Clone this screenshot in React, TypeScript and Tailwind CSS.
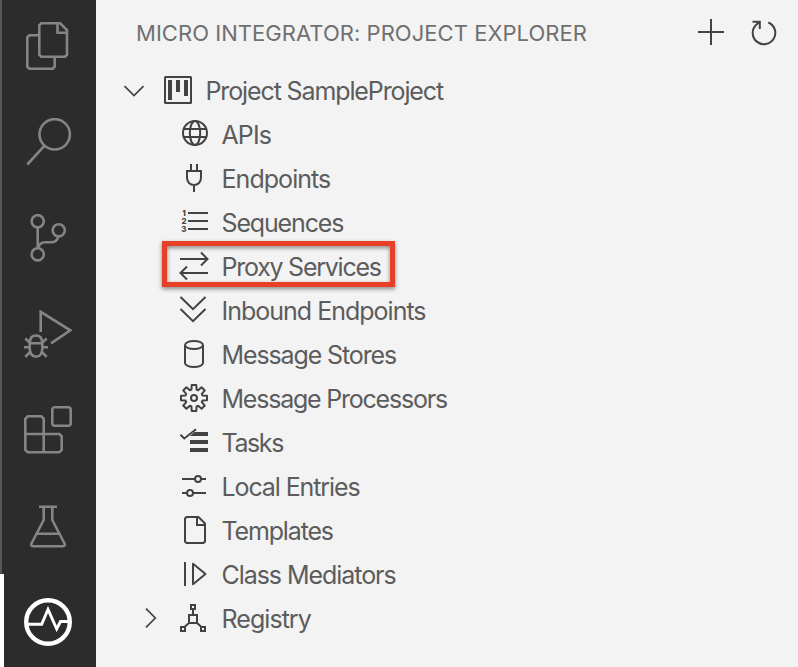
import type { ReactNode } from "react";

function ActivityIcon({ children, active = false }: { children: ReactNode; active?: boolean }) {
  return (
    <div className={`relative flex h-24 w-24 shrink-0 items-center justify-center ${active ? "text-white" : "text-[#858585]"}`}>
      <span className={`absolute left-0 top-0 h-full ${active ? "w-1 bg-white" : "w-0.5 bg-[#575757]"}`} />
      <svg viewBox="0 0 48 48" className="size-12" fill="none" stroke="currentColor" strokeWidth="2.6">
        {children}
      </svg>
    </div>
  );
}

function Glyph({ children }: { children: ReactNode }) {
  return (
    <svg viewBox="0 0 32 32" className="size-8 shrink-0" fill="none" stroke="#424242" strokeWidth="2">
      {children}
    </svg>
  );
}

function gearPoints() {
  const points: string[] = [];
  for (let k = 0; k < 8; k++) {
    for (const [offset, radius] of [[-17, 8.8], [-10, 13.2], [10, 13.2], [17, 8.8]]) {
      const a = ((k * 45 + offset) * Math.PI) / 180;
      points.push(`${16 + radius * Math.sin(a)},${16 - radius * Math.cos(a)}`);
    }
  }
  return points.join(" ");
}

const rows: { label: string; tracking: string; highlighted?: boolean; icon: ReactNode }[] = [
  {
    label: "APIs",
    tracking: "tracking-[-0.9px]",
    icon: (
      <>
        <circle cx="17" cy="15" r="12" />
        <ellipse cx="17" cy="15" rx="5.2" ry="12" />
        <path d="M5.7 11h22.6M5.7 19h22.6" />
      </>
    ),
  },
  {
    label: "Endpoints",
    tracking: "tracking-[-0.95px]",
    icon: <path d="M13 2v7M19 2v7M9 9h14v6.5c0 4.5-3 7.5-7 7.5s-7-3-7-7.5zM16 23v7" />,
  },
  {
    label: "Sequences",
    tracking: "tracking-[-1.15px]",
    icon: (
      <>
        <path d="M10 7h20M10 15h20M10 23h20" />
        <g fill="#424242" stroke="none" fontSize="8" fontWeight="800" fontFamily="Inter, sans-serif" textAnchor="middle">
          <text x="6" y="10">1</text>
          <text x="6" y="18">2</text>
          <text x="6" y="26">3</text>
        </g>
      </>
    ),
  },
  {
    label: "Proxy Services",
    tracking: "tracking-[-1.25px]",
    highlighted: true,
    icon: <path d="M2 9h27M23 2.5 29.5 9 23 15.5M30 23H3M9 16.5 2.5 23 9 29.5" />,
  },
  {
    label: "Inbound Endpoints",
    tracking: "tracking-[-1px]",
    icon: <path d="M2.5 3 15 15.2 27.5 3M2.5 15 15 27.2 27.5 15" />,
  },
  {
    label: "Message Stores",
    tracking: "tracking-[-1.12px]",
    icon: (
      <>
        <ellipse cx="16" cy="7" rx="9" ry="4" />
        <path d="M7 7v18c0 2.2 4 4 9 4s9-1.800 9-4V7" />
      </>
    ),
  },
  {
    label: "Message Processors",
    tracking: "tracking-[-1.22px]",
    icon: (
      <>
        <polygon points={gearPoints()} strokeLinejoin="round" />
        <circle cx="16" cy="16" r="3" />
      </>
    ),
  },
  {
    label: "Tasks",
    tracking: "tracking-[-1.4px]",
    icon: (
      <>
        <path d="M2.500 8.700 6.300 12.500 18 3.300" />
        <path d="M16.500 6H30v4H12zM12 14h18v4H12zM12 22h18v4H12z" fill="#424242" stroke="none" />
      </>
    ),
  },
  {
    label: "Local Entries",
    tracking: "tracking-[-1.1px]",
    icon: (
      <>
        <path d="M4 9h13M23 9h5M4 23h5M15 23h13" />
        <circle cx="20" cy="9" r="3" />
        <circle cx="12" cy="23" r="3" />
      </>
    ),
  },
  {
    label: "Templates",
    tracking: "tracking-[-1.15px]",
    icon: <path d="M8.500 3H20.500L27 9.500V27.500L25.500 29H8.500L7 27.500V4.500zM19 3v8h8" />,
  },
  {
    label: "Class Mediators",
    tracking: "tracking-[-1.05px]",
    icon: <path d="M7 4v24M15 5.800v20.400L27.500 16z" strokeLinejoin="round" />,
  },
];

const labelClass = "whitespace-nowrap pt-0.5 text-[25px] leading-[44px]";

export default function App() {
  return (
    <div className="flex h-[667px] w-[798px] overflow-hidden bg-[#f3f3f3] font-['Inter','Liberation_Sans',sans-serif] text-[#5c5c5c]">
      <nav className="h-full w-24 shrink-0 overflow-hidden bg-[#2c2c2c]">
        <div className="-mt-0.5 flex flex-col">
          <ActivityIcon>
            <path d="M17.300 1.300H36.200L43 8V32.700L41 34.700H17.300L15.300 32.700V3.300zM33.500 1.300v9.400H43" />
            <path d="M15.300 13.300H5.300L3.300 15.300V44.700L5.300 46.700H28.700L30.700 44.700V34.700" />
          </ActivityIcon>
          <ActivityIcon>
            <circle cx="30.700" cy="16.300" r="15.200" />
            <path d="M20.500 27.700 3.300 46.500" />
          </ActivityIcon>
          <ActivityIcon>
            <circle cx="13.700" cy="7.300" r="6.100" />
            <circle cx="34.700" cy="16.300" r="6.100" />
            <circle cx="13.700" cy="40.300" r="6.100" />
            <path d="M13.700 13.400v20.800M34.500 22.400c-1.200 4-3.500 5.900-7 5.900h-6.500c-3.500 0-6 2-6.800 6" />
          </ActivityIcon>
          <ActivityIcon>
            <path d="M16.700 22V1.800L46.300 20.300 27 33.300" />
            <path d="M12 25.500c4.200 0 6.300 3.300 6.300 7.800v5c0 5-2.500 8.400-6.300 8.400s-6.300-3.400-6.300-8.400v-5c0-4.500 2.100-7.800 6.300-7.800zM5.700 33.300h12.600" />
            <path d="M0 37.300h5.700M18.300 37.300H24M1.300 28.500l5 4.500M22.700 28.500l-5 4.500M1.300 46.700l5.200-4.900M22.700 46.700l-5.200-4.900" />
          </ActivityIcon>
          <ActivityIcon>
            <rect x="28.300" y="1.300" width="18.400" height="18.400" rx="2.500" />
            <path d="M3.800 10.300H17.300L19.700 12.700V28H35.300L37.700 30.400V43.900L35.300 46.300H3.800L1.300 43.900V12.700zM1.300 28H19.700V46.300" />
          </ActivityIcon>
          <ActivityIcon>
            <path d="M15 4.700h18M19.700 4.700V18L7.500 41.500c-.7 1.500.1 2.800 1.500 2.800h30c1.400 0 2.200-1.300 1.500-2.800L28.300 18V4.700M12.600 31.700h22.800" />
          </ActivityIcon>
          <ActivityIcon active>
            <circle cx="24" cy="24" r="21.800" strokeWidth="4.400" />
            <path d="M4 26.300H17.700L24 11.500 32.700 31 36.500 23.500H44" strokeWidth="2.900" />
          </ActivityIcon>
        </div>
      </nav>

      <main className="flex min-w-0 flex-1 flex-col">
        <header className="flex h-[68px] items-center pl-10 pr-[18px]">
          <h1 className="flex-1 whitespace-nowrap pb-0.5 text-[22px] leading-[66px] tracking-[0.04px] text-[#6f6f6f]">
            MICRO INTEGRATOR: PROJECT EXPLORER
          </h1>
          <div className="flex gap-[21px]">
            <Glyph>
              <path d="M16 1v26M3 14h26" />
            </Glyph>
            <Glyph>
              <path d="M20.300 4.500A11.300 11.300 0 1 1 8.500 6.500L12 3.600M4.500 3.700h7.300V11" />
            </Glyph>
          </div>
        </header>

        <div className="flex h-11 items-center pl-[22px]">
          <Glyph>
            <path d="M6.500 12.200 16 21.500 25.500 12.200" strokeWidth="1.700" />
          </Glyph>
          <span className="ml-3 flex">
            <Glyph>
              <rect x="3" y="3" width="26" height="26" rx="0.500" />
              <path d="M6 6h4v20H6zM14 6h4v12h-4zM22 6h4v16h-4z" fill="#424242" stroke="none" />
            </Glyph>
          </span>
          <span className={`ml-[11.5px] tracking-[-1.12px] ${labelClass}`}>Project SampleProject</span>
        </div>

        {rows.map((row) => (
          <div key={row.label} className="relative flex h-11 items-center gap-[11.5px] pl-[82px]">
            <Glyph>{row.icon}</Glyph>
            <span className={`${row.tracking} ${labelClass}`}>{row.label}</span>
            {row.highlighted && (
              <span className="absolute -top-[3px] left-[66px] h-[46px] w-[233px] border-[5px] border-[#e84026] drop-shadow-[0_2px_2px_rgba(0,0,0,0.45)]" />
            )}
          </div>
        ))}

        <div className="flex h-11 items-center pl-[38px]">
          <Glyph>
            <path d="M12 6.700 21.300 16 12 25.300" strokeWidth="1.700" />
          </Glyph>
          <span className="ml-3 flex">
            <Glyph>
              <path d="M13 3h4v4h-4zM11 13h8v8h-8zM3 25h4v4H3zM23 25h4v4h-4zM15 7v6M11.500 20.500 6.500 25M18.500 20.500 23.500 25" />
            </Glyph>
          </span>
          <span className={`ml-[11.5px] tracking-[-0.95px] ${labelClass}`}>Registry</span>
        </div>
      </main>
    </div>
  );
}
